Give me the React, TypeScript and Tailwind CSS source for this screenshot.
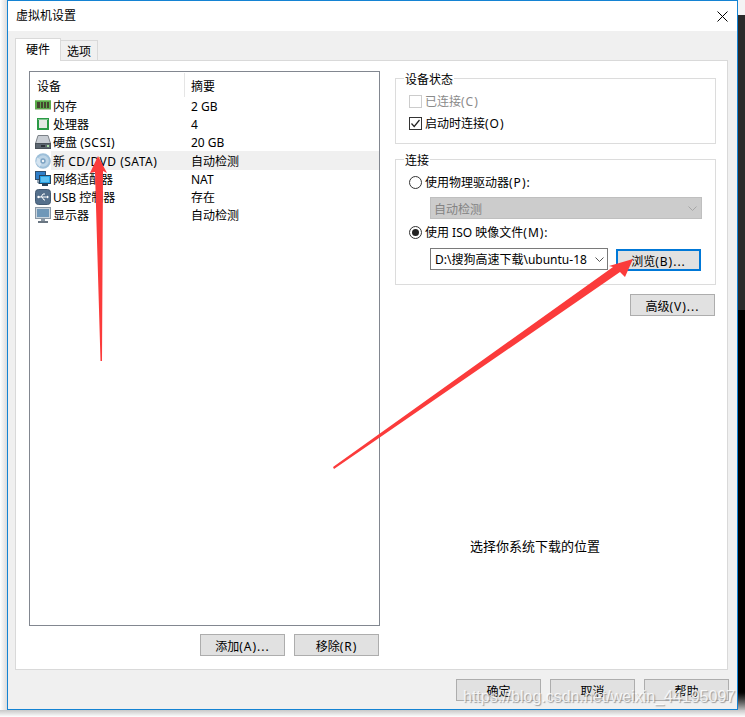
import React from "react";

const MemoryIcon = () => (
  <svg width="16" height="16" viewBox="0 0 16 16" className="shrink-0">
    <rect x="0" y="2" width="16" height="9" fill="#5cab4c" />
    <rect x="0" y="2" width="16" height="1" fill="#86c874" />
    <rect x="2" y="4" width="3" height="6" fill="#45452f" />
    <rect x="6" y="4" width="2" height="6" fill="#45452f" />
    <rect x="9" y="4" width="2" height="6" fill="#45452f" />
    <rect x="12" y="4" width="2" height="6" fill="#45452f" />
    <rect x="0" y="11" width="16" height="1" fill="#b9c9aa" />
  </svg>
);
const CpuIcon = () => (
  <svg width="16" height="16" viewBox="0 0 16 16" className="shrink-0">
    <rect x="2" y="2" width="12" height="12" fill="#2a9a45" />
    <rect x="4" y="4" width="8" height="8" fill="#e4e8e4" />
    <rect x="3" y="3" width="10" height="1" fill="#80c690" />
  </svg>
);
const DiskIcon = () => (
  <svg width="16" height="16" viewBox="0 0 16 16" className="shrink-0">
    <path d="M3 1.5h10l2.5 8H.5z" fill="#c9ced4" stroke="#7c8288" />
    <rect x="0.5" y="9.5" width="15" height="5" fill="#5c6670" stroke="#4a525a" />
    <rect x="6" y="11" width="4" height="2" fill="#2c3238" />
    <rect x="12" y="11" width="2" height="2" fill="#a8e0a0" />
  </svg>
);
const CdIcon = () => (
  <svg width="16" height="16" viewBox="0 0 16 16" className="shrink-0">
    <circle cx="8" cy="8" r="7.75" fill="#9dbfd9" />
    <circle cx="8" cy="8" r="5.8" fill="#bcd4e6" />
    <path d="M2 4.5 8 8 4.5 14 1 10z" fill="#dbe8f2" opacity="0.85" />
    <circle cx="8" cy="8" r="2.7" fill="#7ba2c2" />
    <circle cx="8" cy="8" r="1.2" fill="#f2f6fa" />
  </svg>
);
const NetIcon = () => (
  <svg width="16" height="16" viewBox="0 0 16 16" className="shrink-0">
    <rect x="0.5" y="0.5" width="10" height="8" fill="#2f7fc9" stroke="#30506e" />
    <path d="M3 9v3h3" fill="none" stroke="#30506e" />
    <rect x="4.5" y="4.5" width="11" height="8" fill="#29a3e6" stroke="#26445e" />
    <rect x="6" y="6" width="8" height="5" fill="#5fc2f2" />
    <rect x="7" y="13" width="6" height="2" fill="#26445e" />
  </svg>
);
const UsbIcon = () => (
  <svg width="16" height="16" viewBox="0 0 16 16" className="shrink-0">
    <rect x="0.5" y="0.5" width="15" height="15" rx="3" fill="#55708c" stroke="#445a72" />
    <path d="M3 8h10M6 8l2-3h2M7 8l2 3h1" fill="none" stroke="#fff" strokeWidth="1" />
    <path d="M12 6.5 14 8l-2 1.5z" fill="#fff" />
    <circle cx="3.5" cy="8" r="1.2" fill="#fff" />
  </svg>
);
const MonitorIcon = () => (
  <svg width="16" height="16" viewBox="0 0 16 16" className="shrink-0">
    <rect x="0.5" y="0.5" width="15" height="11" fill="#cbd5de" stroke="#8b98a5" />
    <rect x="2" y="2" width="12" height="8" fill="#6f97b8" />
    <rect x="6" y="12" width="4" height="2" fill="#8b98a5" />
    <rect x="3" y="14" width="10" height="2" fill="#6a7682" />
  </svg>
);

const L = ({ children }: { children: React.ReactNode }) => (
  <span className="tracking-[0.5px]">{children}</span>
);
const P = ({ children }: { children: React.ReactNode }) => (
  <span className="tracking-[1px]">{children}</span>
);
const T = ({ children }: { children: React.ReactNode }) => <span className="pt-[2px] whitespace-nowrap">{children}</span>;

const rows = [
  { icon: <MemoryIcon />, name: "内存", value: "2 GB" },
  { icon: <CpuIcon />, name: "处理器", value: "4" },
  { icon: <DiskIcon />, name: <>硬盘 <L>(SCSI)</L></>, value: "20 GB" },
  { icon: <CdIcon />, name: <>新 <L>CD/DVD (SATA)</L></>, value: "自动检测", active: true },
  { icon: <NetIcon />, name: "网络适配器", value: "NAT" },
  { icon: <UsbIcon />, name: "USB 控制器", value: "存在" },
  { icon: <MonitorIcon />, name: "显示器", value: "自动检测" },
];

const Btn = ({ children, cls = "" }: { children: React.ReactNode; cls?: string }) => (
  <button className={`w-[85px] h-[22px] pt-[3px] flex items-center justify-center bg-[#e1e1e1] border border-[#adadad] text-[12px] leading-none text-black ${cls}`}>
    {children}
  </button>
);

const Chevron = ({ color }: { color: string }) => (
  <svg width="9" height="5" viewBox="0 0 9 5" className="shrink-0">
    <path d="M0.5 0.5 4.5 4.5 8.5 0.5" fill="none" stroke={color} />
  </svg>
);

export default function App() {
  return (
    <div className="relative w-[745px] h-[717px] overflow-hidden bg-white text-[12px] text-black font-['Noto_Sans','Noto_Sans_CJK_SC',sans-serif]">
      <div className="flex h-[710px]">
        <div className="w-[7px] bg-gradient-to-r from-[#ffffff] to-[#dcdcdc]" />
        <div className="w-[731px] flex flex-col border border-[#1483d3] bg-[#f0f0f0]">
          <div className="h-[30px] bg-white flex items-center justify-between pl-[8px] pr-[9px] shrink-0">
            <span>虚拟机设置</span>
            <svg width="11" height="11" viewBox="0 0 11 11">
              <path d="M0.5 0.5 10.5 10.5M10.5 0.5 0.5 10.5" stroke="#000" fill="none" />
            </svg>
          </div>
          <div className="flex items-end pl-[7px] pt-[7px] shrink-0">
            <div className="relative z-10 -mb-px w-[46px] h-[23px] bg-white border border-b-0 border-[#d9d9d9] flex items-center justify-center">硬件</div>
            <div className="w-[37px] h-[20px] pt-[2px] border border-b-0 border-l-0 border-[#d9d9d9] flex items-center justify-center">选项</div>
          </div>
          <div className="ml-[7px] mr-[9px] h-[610px] bg-white border border-[#d9d9d9] flex pl-[13px] pt-[10px] shrink-0">
            <div className="w-[351px] shrink-0 flex flex-col">
              <div className="h-[555px] border border-[#828790] flex flex-col">
                <div className="flex h-[25px] pt-[1px] shrink-0">
                  <div className="w-[155px] pl-[7px] pt-[3px] flex items-center border-r border-[#e5e5e5]">设备</div>
                  <div className="pl-[6px] pt-[3px] flex items-center">摘要</div>
                </div>
                {rows.map((r, i) => (
                  <div key={i} className="flex h-[18.17px] items-center shrink-0">
                    <div className="w-[21px] pl-[5px] shrink-0 flex items-center">{r.icon}</div>
                    <div className={`flex-1 flex h-full items-center ${r.active ? "bg-[#f0f0f0]" : ""}`}>
                      <div className="w-[140px] pl-[2px] pt-[2px] shrink-0 whitespace-nowrap">{r.name}</div>
                      <div className="pt-[2px]">{r.value}</div>
                    </div>
                  </div>
                ))}
              </div>
              <div className="flex justify-end gap-[9px] mt-[8px] mr-[1px]">
                <Btn>添加<P>(A)...</P></Btn>
                <Btn>移除<P>(R)</P></Btn>
              </div>
            </div>
            <div className="w-[321px] ml-[15px] -mt-px flex flex-col">
              <fieldset className="border border-[#dcdcdc] h-[74px]">
                <legend className="ml-[8px] px-[1px] h-[16px] leading-[20px]">设备状态</legend>
                <div className="pl-[13px] pt-[6px] flex flex-col gap-[4px]">
                  <label className="flex items-center h-[18px] gap-[3px] text-[#8a8a8a]">
                    <span className="w-[13px] h-[13px] border border-[#cccccc] bg-white" />
                    <T>已连接<P>(C)</P></T>
                  </label>
                  <label className="flex items-center h-[18px] gap-[3px]">
                    <svg width="13" height="13" viewBox="0 0 13 13" className="shrink-0">
                      <rect x="0.5" y="0.5" width="12" height="12" fill="#fff" stroke="#333" />
                      <path d="M2.5 6.5 5.2 9.5 10.5 3" fill="none" stroke="#222" strokeWidth="1.2" />
                    </svg>
                    <T>启动时连接<P>(O)</P></T>
                  </label>
                </div>
              </fieldset>
              <fieldset className="border border-[#dcdcdc] h-[134px] mt-[7px]">
                <legend className="ml-[8px] px-[1px] h-[16px] leading-[20px]">连接</legend>
                <div className="pl-[13px] pt-[6px] flex flex-col">
                  <label className="flex items-center h-[18px] gap-[3px]">
                    <span className="w-[13px] h-[13px] rounded-full border border-[#333] bg-white" />
                    <T>使用物理驱动器<P>(P):</P></T>
                  </label>
                  <div className="ml-[21px] mt-[6px] w-[272px] h-[22px] bg-[#cccccc] border border-[#bfbfbf] flex items-center justify-between pl-[3px] pr-[4px] text-[#838383]">
                    <span className="pt-[3px]">自动检测</span>
                    <Chevron color="#a6a6a6" />
                  </div>
                  <label className="flex items-center h-[18px] gap-[3px] mt-[4px]">
                    <span className="w-[13px] h-[13px] rounded-full border border-[#333] bg-white flex items-center justify-center">
                      <span className="w-[7px] h-[7px] rounded-full bg-[#222]" />
                    </span>
                    <T>使用 ISO 映像文件<P>(M):</P></T>
                  </label>
                  <div className="flex ml-[21px] mt-[7px] gap-[8px]">
                    <div className="w-[178px] h-[22px] bg-white border border-[#7a7a7a] flex items-center justify-between pl-[4px] pr-[3px] overflow-hidden">
                      <span className="whitespace-nowrap pt-[2px]">D:\搜狗高速下载\ubuntu-18</span>
                      <Chevron color="#555" />
                    </div>
                    <button className="w-[85px] h-[22px] mt-[1px] pt-[3px] flex items-center justify-center bg-[#e1e1e1] border-2 border-[#0078d7] text-[12px] leading-none">浏览<P>(B)...</P></button>
                  </div>
                </div>
              </fieldset>
              <div className="flex justify-end mt-[9px] mr-[1px]">
                <Btn>高级<P>(V)...</P></Btn>
              </div>
              <div className="mt-[221px] ml-[75px] h-[16px] leading-[18px] text-[13px] whitespace-nowrap">选择你系统下载的位置</div>
            </div>
          </div>
          <div className="flex justify-end gap-[9px] pt-[9px] pr-[8px]">
            <Btn>确定</Btn>
            <Btn>取消</Btn>
            <Btn>帮助</Btn>
          </div>
        </div>
        <div className="w-[7px] flex flex-col">
          <div className="h-[15px] bg-[#f4f4f4]" />
          <div className="h-[295px] bg-[#2a2a2a]" />
          <div className="flex-1 bg-black" />
          <div className="h-[20px] bg-gradient-to-b from-[#000000] to-[#bdbdbd]" />
        </div>
      </div>
      <div className="h-[7px] bg-gradient-to-b from-[#c8c8c8] to-[#ffffff]" />

      <svg className="absolute left-0 top-0 pointer-events-none" width="745" height="717" viewBox="0 0 745 717">
        <polygon points="98,156 107,173 103,171 102,361 100.5,361 95,172 90,173" fill="#fb3b3b" />
        <polygon points="633,259 625,277 620,272 334,469 333,467 613,267 609,266" fill="#fb3b3b" />
      </svg>
      <div className="absolute left-[463px] top-[686px] text-[16px] leading-[22px] whitespace-nowrap text-white/80 font-['Liberation_Sans',sans-serif] [text-shadow:1px_1px_1px_rgba(130,130,130,0.75)]">
        https://blog.csdn.net/weixin_44195097
      </div>
    </div>
  );
}
